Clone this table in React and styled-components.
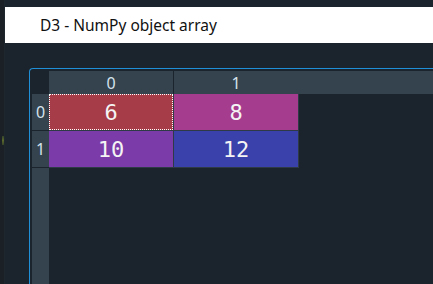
import React from 'react'
import styled, { createGlobalStyle } from 'styled-components'

const GlobalStyle = createGlobalStyle`
  html, body {
    margin: 0;
    padding: 0;
    background: #1b232c;
  }
  #root {
    width: 433px;
    height: 284px;
    overflow: hidden;
  }
`;

const Page = styled.div`
  display: flex;
  width: 433px;
  height: 284px;
  background: #1b232c;
`;

const Gutter = styled.div`
  width: 4px;
  flex-shrink: 0;
  background: #1a2026;
  border-right: 1px solid #1f272e;
  display: flex;
  flex-direction: column;
  align-items: flex-end;
`;

const Glint = styled.div`
  margin-top: 136px;
  width: 2px;
  height: 9px;
  background: linear-gradient(#3a4a2a, #6a7a2e, #3a4a2a);
  opacity: 0.8;
`;

const Main = styled.div`
  flex: 1;
  display: flex;
  flex-direction: column;
  padding-top: 7px;
  min-width: 0;
`;

const TitleBar = styled.div`
  height: 36px;
  background: #ffffff;
  display: flex;
  align-items: center;
  padding-left: 35px;
  font-family: "Noto Sans", "Open Sans", sans-serif;
  font-size: 15.5px;
  color: #111;
`;

const Panel = styled.div`
  margin: 25px 0 0 24px;
  flex: 1;
  display: flex;
  flex-direction: column;
  padding: 2px 0 0 2px;
  border-top: 1px solid #1f8fd8;
  border-left: 1px solid #1f8fd8;
  border-top-left-radius: 4px;
`;

const HeaderRow = styled.div`
  display: flex;
  height: 23px;
  background: #34434e;
`;

const Corner = styled.div`
  width: 17px;
  background: #1b232c;
`;

const ColHeader = styled.div`
  width: 124px;
  border-right: 1px solid ${({ $last }) => ($last ? '#34434e' : '#1b232c')};
  display: flex;
  align-items: center;
  justify-content: center;
  font-family: "Noto Sans", sans-serif;
  font-size: 16px;
  color: #d4e2ec;
`;

const Body = styled.div`
  flex: 1;
  display: flex;
`;

const RowHeaders = styled.div`
  width: 17px;
  background: #34434e;
  display: flex;
  flex-direction: column;
`;

const RowHeader = styled.div`
  height: 36px;
  border-bottom: 1px solid #1b232c;
  display: flex;
  align-items: center;
  justify-content: center;
  font-family: "Noto Sans", sans-serif;
  font-size: 16px;
  color: #d4e2ec;
`;

const Grid = styled.div`
  align-self: flex-start;
  display: grid;
  grid-template-columns: 124px 124px;
  grid-auto-rows: 36px;
  gap: 1px;
  padding: 0 1px 1px 0;
  background: #2e3a45;
`;

const Cell = styled.div`
  background: ${({ $bg }) => $bg};
  display: flex;
  align-items: center;
  justify-content: center;
  font-family: "DejaVu Sans Mono", monospace;
  font-size: 22px;
  color: #f4f4f4;
  outline: ${({ $focused }) => ($focused ? '1px dotted #ffffff' : 'none')};
  outline-offset: -1px;
`;

const cells = [
  { value: 6, bg: '#a63c48', focused: true },
  { value: 8, bg: '#a63c8e' },
  { value: 10, bg: '#7b3ba8' },
  { value: 12, bg: '#3a41aa' },
];

export default function App() {
  return (
    <>
      <GlobalStyle />
      <Page>
        <Gutter>
          <Glint />
        </Gutter>
        <Main>
          <TitleBar>D3 - NumPy object array</TitleBar>
          <Panel>
            <HeaderRow>
              <Corner />
              <ColHeader>0</ColHeader>
              <ColHeader $last>1</ColHeader>
            </HeaderRow>
            <Body>
              <RowHeaders>
                <RowHeader>0</RowHeader>
                <RowHeader>1</RowHeader>
              </RowHeaders>
              <Grid>
                {cells.map((c, i) => (
                  <Cell key={i} $bg={c.bg} $focused={c.focused}>
                    {c.value}
                  </Cell>
                ))}
              </Grid>
            </Body>
          </Panel>
        </Main>
      </Page>
    </>
  );
}
